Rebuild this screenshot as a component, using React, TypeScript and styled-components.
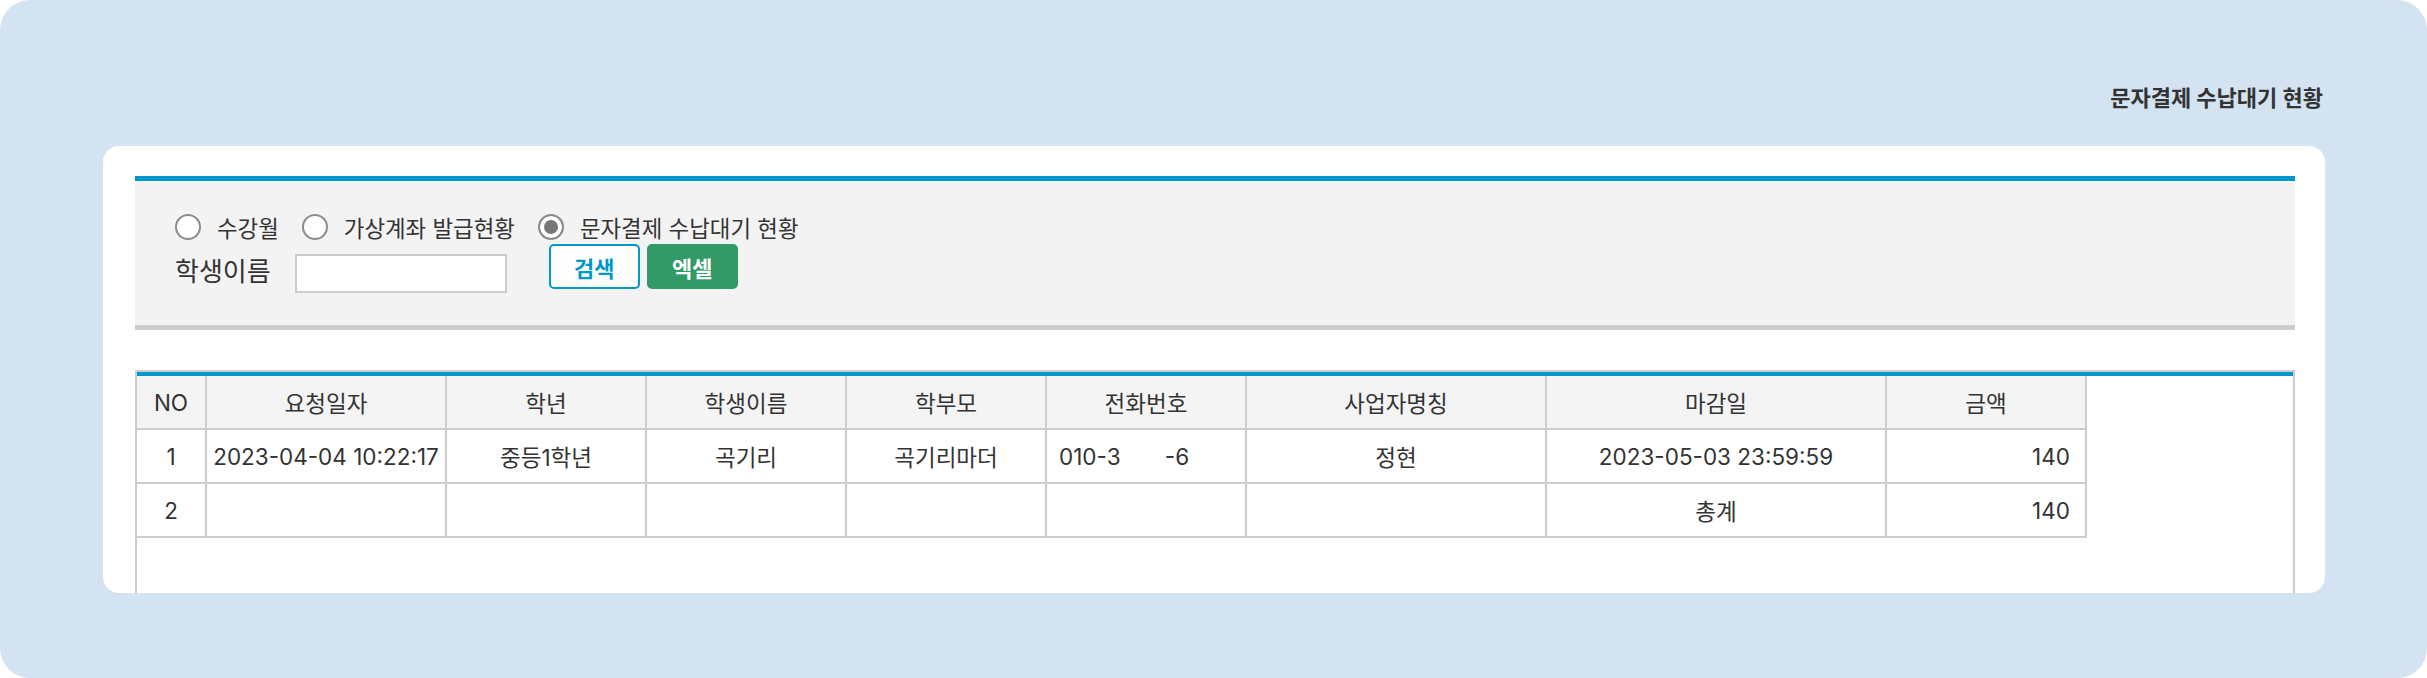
import React from "react";
import styled, { createGlobalStyle } from "styled-components";

const GlobalStyle = createGlobalStyle`
  html, body {
    margin: 0;
    padding: 0;
    background: #fff;
  }
  body {
    font-family: "Inter", "Noto Sans CJK KR", sans-serif;
    color: #333;
  }
`;

const Page = styled.div`
  width: 2427px;
  height: 678px;
  box-sizing: border-box;
  background: #d3e3f1;
  border-radius: 30px;
  padding: 0 102px 85px 103px;
  display: flex;
  flex-direction: column;
`;

const Title = styled.h2`
  margin: 0;
  padding-top: 82px;
  margin-bottom: 32px;
  text-align: right;
  font-size: 22px;
  line-height: 32px;
  font-weight: 700;
  color: #333;
  padding-right: 2px;
`;

const Card = styled.div`
  flex: 1;
  background: #fff;
  border-radius: 16px;
  padding: 30px 30px 0 32px;
  overflow: hidden;
  display: flex;
  flex-direction: column;
  gap: 40px;
`;

const SearchPanel = styled.div`
  background: #f3f3f3;
  border-top: 5px solid #0099cc;
  border-bottom: 5px solid #cccccc;
  padding: 33px 40px 32px;
  display: flex;
  flex-direction: column;
  gap: 4px;
`;

const RadioRow = styled.div`
  display: flex;
  align-items: center;
  height: 26px;
`;

const RadioLabel = styled.label`
  display: flex;
  align-items: center;
  font-size: 22.4px;
  color: #333;
  margin-right: 23px;
  cursor: pointer;
`;

const Radio = styled.input.attrs({ type: "radio" })`
  appearance: none;
  box-sizing: border-box;
  width: 26px;
  height: 26px;
  margin: 0 16px 0 0;
  border: 2px solid #8c8c8c;
  border-radius: 50%;
  background: #fff;

  &:checked {
    background: #777;
    box-shadow: inset 0 0 0 4px #fff;
  }
`;

const FieldRow = styled.div`
  display: flex;
  align-items: flex-start;
`;

const FieldLabel = styled.span`
  font-size: 26px;
  line-height: 32px;
  margin-top: 12px;
  margin-right: 24px;
  color: #333;
`;

const TextInput = styled.input`
  box-sizing: border-box;
  width: 212px;
  height: 39px;
  margin: 10px 42px 0 0;
  border: 2px solid #cccccc;
  background: #fff;
  outline: none;
`;

const Button = styled.button<{ $variant: "search" | "excel" }>`
  box-sizing: border-box;
  width: 91px;
  height: 45px;
  margin-right: 7px;
  border-radius: 5px;
  font-family: "Inter", "Noto Sans CJK KR", sans-serif;
  font-size: 22px;
  font-weight: 700;
  cursor: pointer;
  border: 2px solid ${({ $variant }) => ($variant === "search" ? "#0099cc" : "#339966")};
  background: ${({ $variant }) => ($variant === "search" ? "#fff" : "#339966")};
  color: ${({ $variant }) => ($variant === "search" ? "#0099cc" : "#fff")};
`;

const TableBox = styled.div`
  border: 2px solid #cccccc;
  border-bottom: none;
  min-height: 280px;
`;

const TableInner = styled.div`
  border-top: 4px solid #0099cc;
`;

const Table = styled.table`
  width: 1950px;
  table-layout: fixed;
  border-collapse: separate;
  border-spacing: 0;
  font-size: 22.5px;
  color: #333;
`;

const Th = styled.th`
  height: 54px;
  padding: 0;
  box-sizing: border-box;
  background: #f4f4f4;
  font-weight: 400;
  text-align: center;
  border-right: 2px solid #cccccc;
  border-bottom: 2px solid #cccccc;
`;

const Td = styled.td<{ $align?: "left" | "center" | "right" }>`
  height: 54px;
  box-sizing: border-box;
  padding: 0 ${({ $align }) => ($align === "right" ? "15px" : $align === "left" ? "12px" : "2px")};
  text-align: ${({ $align }) => $align || "center"};
  border-right: 2px solid #cccccc;
  border-bottom: 2px solid #cccccc;
  white-space: pre;
  overflow: hidden;
`;

const columns = [
  { label: "NO", width: 70 },
  { label: "요청일자", width: 240 },
  { label: "학년", width: 200 },
  { label: "학생이름", width: 200 },
  { label: "학부모", width: 200 },
  { label: "전화번호", width: 200 },
  { label: "사업자명칭", width: 300 },
  { label: "마감일", width: 340 },
  { label: "금액", width: 200 },
];

export default function App() {
  return (
    <>
      <GlobalStyle />
      <Page>
        <Title>문자결제 수납대기 현황</Title>
        <Card>
          <SearchPanel>
            <RadioRow>
              <RadioLabel>
                <Radio name="kind" />
                수강월
              </RadioLabel>
              <RadioLabel>
                <Radio name="kind" />
                가상계좌 발급현황
              </RadioLabel>
              <RadioLabel>
                <Radio name="kind" defaultChecked />
                문자결제 수납대기 현황
              </RadioLabel>
            </RadioRow>
            <FieldRow>
              <FieldLabel>학생이름</FieldLabel>
              <TextInput />
              <Button $variant="search">검색</Button>
              <Button $variant="excel">엑셀</Button>
            </FieldRow>
          </SearchPanel>

          <TableBox>
            <TableInner>
              <Table>
                <colgroup>
                  {columns.map((c) => (
                    <col key={c.label} style={{ width: c.width }} />
                  ))}
                </colgroup>
                <thead>
                  <tr>
                    {columns.map((c) => (
                      <Th key={c.label}>{c.label}</Th>
                    ))}
                  </tr>
                </thead>
                <tbody>
                  <tr>
                    <Td>1</Td>
                    <Td>2023-04-04 10:22:17</Td>
                    <Td>중등1학년</Td>
                    <Td>곡기리</Td>
                    <Td>곡기리마더</Td>
                    <Td $align="left">{"010-3       -6"}</Td>
                    <Td>정현</Td>
                    <Td>2023-05-03 23:59:59</Td>
                    <Td $align="right">140</Td>
                  </tr>
                  <tr>
                    <Td>2</Td>
                    <Td />
                    <Td />
                    <Td />
                    <Td />
                    <Td />
                    <Td />
                    <Td>총계</Td>
                    <Td $align="right">140</Td>
                  </tr>
                </tbody>
              </Table>
            </TableInner>
          </TableBox>
        </Card>
      </Page>
    </>
  );
}
